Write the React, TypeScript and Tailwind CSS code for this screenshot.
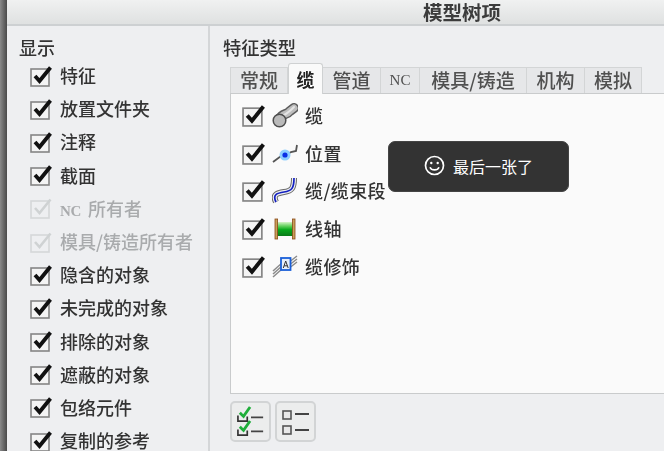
import React from "react";

const FONT = "[font-family:'Noto_Sans_CJK_SC','Liberation_Sans',sans-serif]";

function Check({ disabled = false, big = false }: { disabled?: boolean; big?: boolean }) {
  const stroke = disabled ? "#cfd2d3" : "#111";
  return (
    <svg width={big ? 23 : 22} height={big ? 23 : 22} viewBox="0 0 22 22" className="shrink-0">
      <rect x="1" y="4" width="18" height="17" fill={disabled ? "#eeeff1" : "#f4f4f4"} stroke={disabled ? "#d5d7d9" : "#858585"} strokeWidth="1.6" />
      <path d="M5 11 L9.5 16 L20.5 2.5" fill="none" stroke={stroke} strokeWidth={disabled ? 2.6 : 3.8} />
    </svg>
  );
}

function CableIcon() {
  return (
    <svg width="26" height="25" viewBox="0 0 26 25">
      <path d="M7 17 C11 9 14 13 18 8 L22 5" fill="none" stroke="#5c5c5c" strokeWidth="10" strokeLinecap="round" />
      <path d="M7 17 C11 9 14 13 18 8 L22 5" fill="none" stroke="#bdbdbd" strokeWidth="7" strokeLinecap="round" />
      <path d="M12 12 C14 11 17 9 22 4" fill="none" stroke="#e4e4e4" strokeWidth="2" strokeLinecap="round" />
      <circle cx="7.5" cy="17.5" r="6.3" fill="#bababa" stroke="#4d4d4d" strokeWidth="1.5" />
    </svg>
  );
}
function LocationIcon() {
  return (
    <svg width="26" height="24" viewBox="0 0 26 24">
      <path d="M1 21 L9 15 L14 14 L19 11 L24 10 L25 4" fill="none" stroke="#555" strokeWidth="1.8" />
      <circle cx="13" cy="14" r="5.5" fill="#8ecfff" />
      <circle cx="13" cy="14" r="2.6" fill="#0a30e6" />
    </svg>
  );
}
function SegmentIcon() {
  return (
    <svg width="26" height="27" viewBox="0 0 26 27">
      <path d="M4 25 C0 17 6 16 12 15 C20 14 22 11 22 1" fill="none" stroke="#6a6a6a" strokeWidth="6" />
      <path d="M4 25 C0 17 6 16 12 15 C20 14 22 11 22 1" fill="none" stroke="#eef0f2" strokeWidth="4" />
      <path d="M4 25 C0 17 6 16 12 15 C20 14 22 11 22 1" fill="none" stroke="#1420c0" strokeWidth="1.7" />
    </svg>
  );
}
function SpoolIcon() {
  return (
    <svg width="22" height="22" viewBox="0 0 22 22">
      <defs>
        <linearGradient id="sp" x1="0" y1="0" x2="0" y2="1">
          <stop offset="0" stopColor="#d6f3c8" />
          <stop offset="0.3" stopColor="#5fcf5a" />
          <stop offset="0.55" stopColor="#08a81c" />
          <stop offset="1" stopColor="#0a7a18" />
        </linearGradient>
      </defs>
      <rect x="2" y="4" width="18" height="14" fill="url(#sp)" />
      <rect x="1" y="1" width="2.6" height="20" fill="#c9a05a" stroke="#8a4a18" strokeWidth="0.8" />
      <rect x="18.4" y="1" width="2.6" height="20" fill="#c9a05a" stroke="#8a4a18" strokeWidth="0.8" />
    </svg>
  );
}
function CosmeticIcon() {
  return (
    <svg width="26" height="23" viewBox="0 0 26 23">
      <path d="M1 16 L10 8 M1 19 L10 11 M1 22 L10 14 M16 8 L25 1 M16 11 L25 4 M16 14 L25 7" stroke="#8a8a8a" strokeWidth="1.5" />
      <rect x="9" y="3" width="9.5" height="12" fill="#e6eefa" stroke="#1a5fd8" strokeWidth="1.8" />
      <path d="M11.3 13 L13.7 6 L16.2 13 M12.2 10.8 H15.2" fill="none" stroke="#333" strokeWidth="1" />
    </svg>
  );
}

function CheckAllIcon() {
  return (
    <svg width="28" height="32" viewBox="0 0 30 34">
      <path d="M1 10 V16 H11 V11 M1 25 V31 H11 V26" fill="none" stroke="#333" strokeWidth="1.8" />
      <path d="M3 7 L7 11 L14 1 M3 22 L7 26 L14 16" fill="none" stroke="#1fae3a" strokeWidth="3" />
      <path d="M15 12 H28 M15 27 H28" stroke="#444" strokeWidth="1.8" />
    </svg>
  );
}
function UncheckAllIcon() {
  return (
    <svg width="28" height="28" viewBox="0 0 28 28">
      <rect x="1" y="3" width="8" height="8" fill="#e8e8e8" stroke="#555" strokeWidth="1.6" />
      <rect x="1" y="18" width="8" height="8" fill="#e8e8e8" stroke="#555" strokeWidth="1.6" />
      <path d="M13 6 H27 M13 22 H27" stroke="#444" strokeWidth="1.8" />
    </svg>
  );
}

const leftItems: { t: React.ReactNode; d?: boolean }[] = [
  { t: "特征" },
  { t: "放置文件夹" },
  { t: "注释" },
  { t: "截面" },
  { t: <><span className="text-[15px] [font-family:'Liberation_Serif',serif] font-bold tracking-tight">NC</span><span className="ml-[7px]">所有者</span></>, d: true },
  { t: "模具/铸造所有者", d: true },
  { t: "隐含的对象" },
  { t: "未完成的对象" },
  { t: "排除的对象" },
  { t: "遮蔽的对象" },
  { t: "包络元件" },
  { t: "复制的参考" },
];

const tabs = [
  { t: "常规", w: "w-[58px]" },
  { t: "缆", w: "w-[35px]", active: true },
  { t: "管道", w: "w-[58px]" },
  { t: "NC", w: "w-[39px]", nc: true },
  { t: "模具/铸造", w: "w-[107px]" },
  { t: "机构", w: "w-[58px]" },
  { t: "模拟", w: "w-[57px]" },
];

const features = [
  { t: "缆", icon: <CableIcon /> },
  { t: "位置", icon: <LocationIcon /> },
  { t: "缆/缆束段", icon: <SegmentIcon /> },
  { t: "线轴", icon: <SpoolIcon /> },
  { t: "缆修饰", icon: <CosmeticIcon /> },
];

export default function App() {
  return (
    <div className={`relative w-[664px] h-[451px] overflow-hidden ${FONT}`}>
      <div className="w-full h-full flex bg-[#eeeff1] text-[#333] font-medium blur-[0.35px]">
        <div className="w-[7px] shrink-0 bg-gradient-to-r from-[#8a8a8a] to-[#4a4a4a]" />
        <div className="flex-1 min-w-0 flex flex-col">
          <header className="h-[26px] shrink-0 border-b-2 border-[#cdd0d2] bg-gradient-to-b from-[#f0f1f1] to-[#dfe1e1] flex pl-[416px] items-center">
            <span className="text-[19.5px] leading-[22px] font-bold text-[#3c3c3c] whitespace-nowrap">模型树项</span>
          </header>
          <div className="flex-1 flex min-h-0">
            <aside className="w-[203px] shrink-0 pt-[8px] pl-[12px] border-r-2 border-[#d4d6d8] overflow-hidden">
              <div className="text-[18px] leading-[26px]">显示</div>
              <ul className="pl-[11px] -mt-[1px] flex flex-col">
                {leftItems.map((it, i) => (
                  <li key={i} className={`h-[33.2px] flex items-center gap-[8px] text-[18px] whitespace-nowrap ${it.d ? "text-[#a9abad]" : ""}`}>
                    <Check disabled={it.d} />
                    <span>{it.t}</span>
                  </li>
                ))}
              </ul>
            </aside>
            <main className="flex-1 min-w-0 pt-[8px] pl-[13px]">
              <div className="text-[18.3px] leading-[26px]">特征类型</div>
              <nav className="h-[28px] mt-[5px] pl-[7px] flex items-end relative z-10">
                {tabs.map((tab) => (
                  <div
                    key={tab.t}
                    className={
                      tab.active
                        ? `${tab.w} h-[31px] -mt-[3px] bg-[#fafafa] border border-b-0 border-[#cfd1d2] rounded-t-[3px] flex items-center justify-center font-bold text-[18px] text-[#222] shrink-0 -mb-[1px]`
                        : `${tab.w} h-[26px] bg-[#e6e7e9] border-t border-r border-[#d3d5d6] first:border-l flex items-center justify-center text-[19px] font-medium text-[#505050] shrink-0 whitespace-nowrap ${tab.nc ? "!text-[15px] font-bold [font-family:'Liberation_Serif',serif] text-[#555a70]" : ""}`
                    }
                  >
                    {tab.t}
                  </div>
                ))}
              </nav>
              <section className="ml-[7px] h-[301px] bg-[#fafafa] border border-r-0 border-[#c9cbcc] pl-[11px] pt-[3px]">
                {features.map((f) => (
                  <div key={f.t} className="h-[37.6px] flex items-center text-[18px] whitespace-nowrap">
                    <Check big />
                    <div className="w-[26px] ml-[7px] flex justify-center shrink-0">{f.icon}</div>
                    <span className="ml-[7px] tracking-[0.4px]">{f.t}</span>
                  </div>
                ))}
              </section>
              <div className="ml-[7px] mt-[7px] flex gap-[4px]">
                <button className="w-[41px] h-[41px] bg-[#eceded] border-2 border-[#d2d4d5] rounded-[5px] flex items-center justify-center">
                  <CheckAllIcon />
                </button>
                <button className="w-[41px] h-[41px] bg-[#eceded] border-2 border-[#d2d4d5] rounded-[5px] flex items-center justify-center">
                  <UncheckAllIcon />
                </button>
              </div>
            </main>
          </div>
        </div>
      </div>
      <div className="absolute left-[388px] top-[141px] w-[181px] h-[51px] pb-[2px] rounded-[7px] bg-[#333333] border border-[#444] flex items-center justify-center gap-[8px] text-white text-[16px]">
        <svg width="21" height="21" viewBox="0 0 21 21" fill="none" stroke="#fff">
          <circle cx="10.5" cy="10.5" r="9" strokeWidth="1.7" />
          <circle cx="7.3" cy="8" r="1.2" fill="#fff" stroke="none" />
          <circle cx="13.7" cy="8" r="1.2" fill="#fff" stroke="none" />
          <path d="M6 12.2 C7.5 15.8 13.5 15.8 15 12.2" strokeWidth="1.6" />
        </svg>
        <span>最后一张了</span>
      </div>
    </div>
  );
}
